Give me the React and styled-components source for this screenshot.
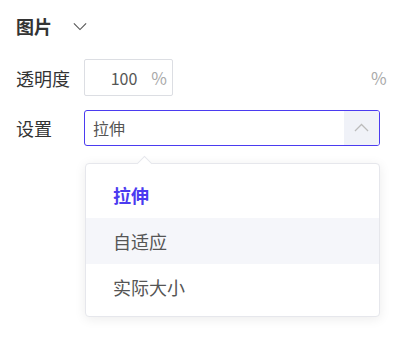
import React from "react";
import styled, { createGlobalStyle } from "styled-components";

const GlobalStyle = createGlobalStyle`
  body {
    margin: 0;
    background: #fff;
    font-family: "Noto Sans CJK SC", "Noto Sans", sans-serif;
  }
`;

const Panel = styled.div`
  width: 412px;
  height: 364px;
  box-sizing: border-box;
  padding: 12px 16px 0 16px;
`;

const Header = styled.div`
  display: flex;
  align-items: center;
  height: 28px;
  gap: 21px;
`;

const Title = styled.span`
  font-size: 18px;
  font-weight: 700;
  color: #333;
`;

const Row = styled.div`
  display: flex;
  align-items: center;
  margin-top: ${(p) => p.top}px;
  position: relative;
`;

const Label = styled.span`
  width: 68px;
  font-size: 18px;
  color: #333;
`;

const NumberBox = styled.div`
  width: 89px;
  height: 37px;
  box-sizing: border-box;
  border: 1px solid #dcdee3;
  border-radius: 2px;
  display: flex;
  align-items: center;
  justify-content: flex-end;
  padding-right: 5px;
  font-size: 16px;
`;

const Value = styled.span`
  color: #555;
  margin-right: 14px;
`;

const Unit = styled.span`
  color: #aaa;
  font-size: 17px;
  margin-left: ${(p) => p.left || 0}px;
`;

const Select = styled.div`
  width: 296px;
  height: 36px;
  box-sizing: border-box;
  border: 1px solid #4b3bf0;
  border-radius: 3px;
  display: flex;
  align-items: stretch;
  overflow: hidden;
`;

const SelectValue = styled.div`
  flex: 1;
  display: flex;
  align-items: center;
  padding-left: 8px;
  font-size: 16px;
  color: #555;
`;

const ArrowBtn = styled.div`
  width: 35px;
  background: #f0f2f8;
  display: flex;
  align-items: center;
  justify-content: center;
`;

const Menu = styled.div`
  position: absolute;
  left: 69px;
  top: 53px;
  width: 295px;
  box-sizing: border-box;
  background: #fff;
  border: 1px solid #e6e7ec;
  border-radius: 4px;
  box-shadow: 0 2px 12px rgba(0, 0, 0, 0.08);
  padding: 8px 0 6px 0;

  &::before {
    content: "";
    position: absolute;
    top: -6px;
    left: 53px;
    width: 10px;
    height: 10px;
    background: #fff;
    border-left: 1px solid #e6e7ec;
    border-top: 1px solid #e6e7ec;
    transform: rotate(45deg);
  }
`;

const Item = styled.div`
  height: 46px;
  display: flex;
  align-items: center;
  padding-left: 27px;
  font-size: 18px;
  position: relative;
  color: ${(p) => (p.selected ? "#4b3bf0" : "#555")};
  font-weight: ${(p) => (p.selected ? 700 : 400)};
  background: ${(p) => (p.hover ? "#f5f6fa" : "transparent")};
`;

const Chevron = ({ up, color, size }) => (
  <svg width={size} height={size / 2 + 2} viewBox="0 0 16 9" fill="none">
    <path
      d={up ? "M1 8 L8 1 L15 8" : "M1 1 L8 8 L15 1"}
      stroke={color}
      strokeWidth="1.3"
    />
  </svg>
);

export default function App() {
  return (
    <>
      <GlobalStyle />
      <Panel>
        <Header>
          <Title>图片</Title>
          <Chevron color="#555" size={14} />
        </Header>
        <Row top={19}>
          <Label>透明度</Label>
          <NumberBox>
            <Value>100</Value>
            <Unit>%</Unit>
          </NumberBox>
          <Unit left={198}>%</Unit>
        </Row>
        <Row top={14}>
          <Label>设置</Label>
          <Select>
            <SelectValue>拉伸</SelectValue>
            <ArrowBtn>
              <Chevron up color="#bbb" size={15} />
            </ArrowBtn>
          </Select>
          <Menu>
            <Item selected>拉伸</Item>
            <Item hover>自适应</Item>
            <Item>实际大小</Item>
          </Menu>
        </Row>
      </Panel>
    </>
  );
}
